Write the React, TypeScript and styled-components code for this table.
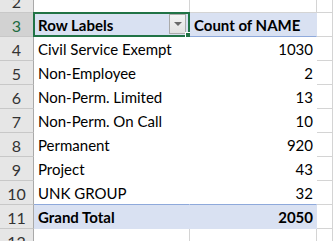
import { Fragment } from "react";
import styled, { createGlobalStyle } from "styled-components";

const GlobalStyle = createGlobalStyle`
  html, body {
    margin: 0;
    padding: 0;
    background: #ffffff;
  }
  body {
    font-family: "Lato", "Open Sans", sans-serif;
    overflow: hidden;
  }
`;

type Row = { label: string; count: number };

const rows: Row[] = [
  { label: "Civil Service Exempt", count: 1030 },
  { label: "Non-Employee", count: 2 },
  { label: "Non-Perm. Limited", count: 13 },
  { label: "Non-Perm. On Call", count: 10 },
  { label: "Permanent", count: 920 },
  { label: "Project", count: 43 },
  { label: "UNK GROUP", count: 32 },
];

const Sheet = styled.div`
  width: 333px;
  height: 241px;
  overflow: hidden;
`;

const Grid = styled.div`
  display: grid;
  grid-template-columns: 34px 156px 127px 1fr;
  grid-auto-rows: 24px;
  margin-top: -11px;
`;

const RowHead = styled.div<{ $selected?: boolean }>`
  display: flex;
  align-items: center;
  justify-content: center;
  background: ${(p) => (p.$selected ? "#d2d2d2" : "#e6e6e6")};
  color: ${(p) => (p.$selected ? "#1e6b41" : "#333333")};
  border-right: 1px solid #a9a9a9;
  border-bottom: 1px solid #c8c8c8;
  font-size: 16px;
  padding-top: 1px;
`;

const Cell = styled.div<{
  $align?: "left" | "right";
  $bold?: boolean;
  $band?: "head" | "total";
}>`
  position: relative;
  display: flex;
  align-items: center;
  justify-content: ${(p) => (p.$align === "right" ? "flex-end" : "flex-start")};
  padding: 1px 3px 0 4px;
  font-size: 15px;
  color: #000000;
  white-space: nowrap;
  font-weight: ${(p) => (p.$bold ? 700 : 400)};
  background: ${(p) => (p.$band ? "#d9e1f2" : "#ffffff")};
  border-right: 1px solid ${(p) => (p.$band ? "#d9e1f2" : "#ffffff")};
  border-bottom: 1px solid
    ${(p) => (p.$band === "head" ? "#8ea9db" : p.$band ? "#d9e1f2" : "#ffffff")};
  border-top: ${(p) => (p.$band === "total" ? "1px solid #8ea9db" : "none")};
  margin-top: ${(p) => (p.$band === "total" ? "-1px" : "0")};
`;

const Filler = styled.div`
  border-right: 1px solid #d4d4d4;
  border-bottom: 1px solid #d4d4d4;
  background: #ffffff;
`;

const Selection = styled.div`
  position: absolute;
  left: -1px;
  top: -1px;
  right: -1px;
  bottom: -1px;
  border: 2px solid #217346;
  pointer-events: none;
`;

const FillHandle = styled.div`
  position: absolute;
  right: -4px;
  bottom: -4px;
  width: 5px;
  height: 5px;
  background: #217346;
  border: 1px solid #ffffff;
`;

const DropButton = styled.div`
  position: absolute;
  right: 3px;
  top: 1px;
  width: 15px;
  height: 18px;
  border: 1px solid #ababab;
  background: linear-gradient(#f4f4f4, #e2e2e2);
  display: flex;
  align-items: center;
  justify-content: center;
`;

const Arrow = styled.span`
  width: 0;
  height: 0;
  border-left: 4px solid transparent;
  border-right: 4px solid transparent;
  border-top: 4px solid #6a6a6a;
`;

export default function App() {
  return (
    <Sheet>
      <GlobalStyle />
      <Grid>
        <RowHead>2</RowHead>
        <Filler />
        <Filler />
        <Filler />

        <RowHead $selected>3</RowHead>
        <Cell $bold $band="head">
          Row Labels
          <DropButton>
            <Arrow />
          </DropButton>
          <Selection>
            <FillHandle />
          </Selection>
        </Cell>
        <Cell $bold $band="head">
          Count of NAME
        </Cell>
        <Filler />

        {rows.map((r, i) => (
          <Fragment key={r.label}>
            <RowHead>{i + 4}</RowHead>
            <Cell>{r.label}</Cell>
            <Cell $align="right">{r.count}</Cell>
            <Filler />
          </Fragment>
        ))}

        <RowHead>11</RowHead>
        <Cell $bold $band="total">
          Grand Total
        </Cell>
        <Cell $bold $band="total" $align="right">
          2050
        </Cell>
        <Filler />

        <RowHead>12</RowHead>
        <Filler />
        <Filler />
        <Filler />
      </Grid>
    </Sheet>
  );
}
